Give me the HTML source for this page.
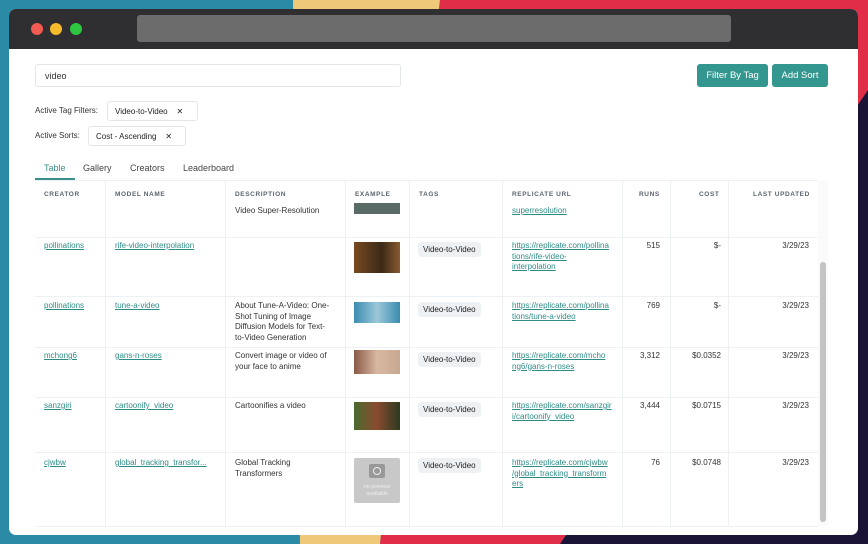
<!DOCTYPE html>
<html><head><meta charset="utf-8"><style>
*{margin:0;padding:0;box-sizing:border-box}
body{width:868px;height:544px;overflow:hidden;position:relative;font-family:"Liberation Sans",sans-serif;background:#1b1437}
.bg{position:absolute;inset:0}
.win{position:absolute;left:9px;top:9px;width:849px;height:526px;border-radius:7px;background:#fff;overflow:hidden}
.tb{position:absolute;left:0;top:0;right:0;height:40px;background:#2f2f31}
.dot{position:absolute;top:14px;width:12px;height:12px;border-radius:50%}
.addr{position:absolute;left:128px;top:6px;width:594px;height:27px;background:#6c6c6c;border-radius:3px}
.a{position:absolute;white-space:nowrap}
.inp{left:26px;top:55px;width:366px;height:23px;border:1px solid #e3e6ea;border-radius:3px;font-size:9px;color:#333;padding:6px 9px}
.btn{top:55px;height:23px;background:#33978f;color:#fff;font-size:9.5px;border-radius:3px;text-align:center;line-height:23px}
.lbl{font-size:8px;color:#333}
.chip{height:20px;border:1px solid #e3e6ea;border-radius:3px;font-size:8px;color:#222;padding:5px 7px}
.tab{top:154px;font-size:9px;color:#444}
.h{top:182px;font-size:6.5px;font-weight:bold;color:#5c6470;letter-spacing:.6px}
.t{font-size:8px;color:#333;line-height:10.5px}
.l{font-size:8px;color:#2d8c86;text-decoration:underline;line-height:10.5px}
.tag{font-size:8px;color:#222;background:#eef1f4;border-radius:4px;padding:3px 5px}
.vl{position:absolute;top:172px;height:345px;width:1px;background:#eef1f4}
.hl{position:absolute;left:26px;width:783px;height:1px;background:#eef1f4}
.img{position:absolute;left:345px;width:46px}
</style></head><body>
<svg class="bg" width="868" height="544">
<rect width="868" height="544" fill="#2b8ba6"/>
<polygon points="293,0 440,0 380,544 300,544" fill="#efc87a"/>
<polygon points="440,0 868,0 868,90 560,544 380,544" fill="#e02e48"/>
<polygon points="868,90 868,544 560,544" fill="#1b1437"/>
</svg>
<div class="win">
<div class="tb"><div class="dot" style="left:22px;background:#f25b51"></div><div class="dot" style="left:41px;background:#f6bb2d"></div><div class="dot" style="left:61px;background:#2fc742"></div><div class="addr"></div></div>
<div class="a inp">video</div>
<div class="a btn" style="left:688px;width:71px">Filter By Tag</div>
<div class="a btn" style="left:763px;width:56px">Add Sort</div>
<div class="a lbl" style="left:26px;top:97px">Active Tag Filters:</div>
<div class="a chip" style="left:98px;top:92px;width:91px">Video-to-Video &nbsp;&nbsp;&nbsp;✕</div>
<div class="a lbl" style="left:26px;top:122px">Active Sorts:</div>
<div class="a chip" style="left:79px;top:117px;width:98px">Cost - Ascending &nbsp;&nbsp;&nbsp;✕</div>
<div class="a tab" style="left:35px;color:#3b8f8a">Table</div>
<div class="a tab" style="left:74px">Gallery</div>
<div class="a tab" style="left:121px">Creators</div>
<div class="a tab" style="left:174px">Leaderboard</div>
<div class="a" style="left:26px;top:169px;width:40px;height:2px;background:#3b8f8a"></div>
<div class="hl" style="top:171px"></div>
<div class="vl" style="left:96px"></div><div class="vl" style="left:216px"></div><div class="vl" style="left:336px"></div><div class="vl" style="left:400px"></div><div class="vl" style="left:493px"></div><div class="vl" style="left:613px"></div><div class="vl" style="left:661px"></div><div class="vl" style="left:719px"></div><div class="vl" style="left:809px;background:#f3f3f3"></div>
<div class="a h" style="left:35px">CREATOR</div><div class="a h" style="left:106px">MODEL NAME</div><div class="a h" style="left:226px">DESCRIPTION</div><div class="a h" style="left:346px">EXAMPLE</div><div class="a h" style="left:410px">TAGS</div><div class="a h" style="left:503px">REPLICATE URL</div><div class="a h" style="left:630px">RUNS</div><div class="a h" style="left:690px">COST</div><div class="a h" style="left:744px">LAST UPDATED</div>
<div class="a" style="left:809px;top:172px;width:10px;height:345px;background:#fafafa"></div>
<div class="a" style="left:811px;top:253px;width:6px;height:260px;background:#c4c4c4;border-radius:3px"></div>
<div class="a t" style="left:226px;top:197px">Video Super-Resolution</div>
<div class="a" style="left:345px;top:194px;width:46px;height:11px;background:#5a6a66"></div>
<div class="a l" style="left:503px;top:197px">superresolution</div>
<div class="hl" style="top:228px"></div><div class="hl" style="top:287px"></div><div class="hl" style="top:338px"></div><div class="hl" style="top:388px"></div><div class="hl" style="top:443px"></div><div class="hl" style="top:517px"></div>
<!-- r1 -->
<div class="a l" style="left:35px;top:232px">pollinations</div><div class="a l" style="left:106px;top:232px">rife-video-interpolation</div>
<div class="img" style="top:233px;height:31px;background:linear-gradient(90deg,#7a4a20,#3a2a18 60%,#8a5a30)"></div>
<div class="a tag" style="left:409px;top:233px">Video-to-Video</div>
<div class="a l" style="left:503px;top:232px">https://replicate.com/pollina<br>tions/rife-video-<br>interpolation</div>
<div class="a t" style="left:600px;width:51px;text-align:right;top:232px">515</div><div class="a t" style="left:660px;width:52px;text-align:right;top:232px">$-</div><div class="a t" style="left:720px;width:80px;text-align:right;top:232px">3/29/23</div>
<!-- r2 -->
<div class="a l" style="left:35px;top:292px">pollinations</div><div class="a l" style="left:106px;top:292px">tune-a-video</div>
<div class="a t" style="left:226px;top:292px">About Tune-A-Video: One-<br>Shot Tuning of Image<br>Diffusion Models for Text-<br>to-Video Generation</div>
<div class="img" style="top:293px;height:21px;background:linear-gradient(90deg,#3a8cb0,#9cc8d8 50%,#3a8cb0)"></div>
<div class="a tag" style="left:409px;top:293px">Video-to-Video</div>
<div class="a l" style="left:503px;top:292px">https://replicate.com/pollina<br>tions/tune-a-video</div>
<div class="a t" style="left:600px;width:51px;text-align:right;top:292px">769</div><div class="a t" style="left:660px;width:52px;text-align:right;top:292px">$-</div><div class="a t" style="left:720px;width:80px;text-align:right;top:292px">3/29/23</div>
<!-- r3 -->
<div class="a l" style="left:35px;top:342px">mchong6</div><div class="a l" style="left:106px;top:342px">gans-n-roses</div>
<div class="a t" style="left:226px;top:342px">Convert image or video of<br>your face to anime</div>
<div class="img" style="top:341px;height:24px;background:linear-gradient(90deg,#8a5a48,#d8b8a0 50%,#c8a890)"></div>
<div class="a tag" style="left:409px;top:343px">Video-to-Video</div>
<div class="a l" style="left:503px;top:342px">https://replicate.com/mcho<br>ng6/gans-n-roses</div>
<div class="a t" style="left:600px;width:51px;text-align:right;top:342px">3,312</div><div class="a t" style="left:660px;width:52px;text-align:right;top:342px">$0.0352</div><div class="a t" style="left:720px;width:80px;text-align:right;top:342px">3/29/23</div>
<!-- r4 -->
<div class="a l" style="left:35px;top:392px">sanzgiri</div><div class="a l" style="left:106px;top:392px">cartoonify_video</div>
<div class="a t" style="left:226px;top:392px">Cartoonifies a video</div>
<div class="img" style="top:393px;height:28px;background:linear-gradient(90deg,#4a6a30,#8a4a30 50%,#2a3a20)"></div>
<div class="a tag" style="left:409px;top:393px">Video-to-Video</div>
<div class="a l" style="left:503px;top:392px">https://replicate.com/sanzgir<br>i/cartoonify_video</div>
<div class="a t" style="left:600px;width:51px;text-align:right;top:392px">3,444</div><div class="a t" style="left:660px;width:52px;text-align:right;top:392px">$0.0715</div><div class="a t" style="left:720px;width:80px;text-align:right;top:392px">3/29/23</div>
<!-- r5 -->
<div class="a l" style="left:35px;top:449px">cjwbw</div><div class="a l" style="left:106px;top:449px">global_tracking_transfor...</div>
<div class="a t" style="left:226px;top:449px">Global Tracking<br>Transformers</div>
<div class="img" style="top:449px;height:45px;background:#c8c8c8;border-radius:2px;color:#eee;font-size:5.5px;text-align:center;padding-top:26px;line-height:6.5px">no preview<br>available<div style="position:absolute;left:15px;top:6px;width:16px;height:14px;background:#999;border-radius:2px"><div style="margin:3px auto;width:8px;height:8px;border:1.5px solid #eee;border-radius:50%"></div></div></div>
<div class="a tag" style="left:409px;top:449px">Video-to-Video</div>
<div class="a l" style="left:503px;top:449px">https://replicate.com/cjwbw<br>/global_tracking_transform<br>ers</div>
<div class="a t" style="left:600px;width:51px;text-align:right;top:449px">76</div><div class="a t" style="left:660px;width:52px;text-align:right;top:449px">$0.0748</div><div class="a t" style="left:720px;width:80px;text-align:right;top:449px">3/29/23</div>
</div>
</body></html>
